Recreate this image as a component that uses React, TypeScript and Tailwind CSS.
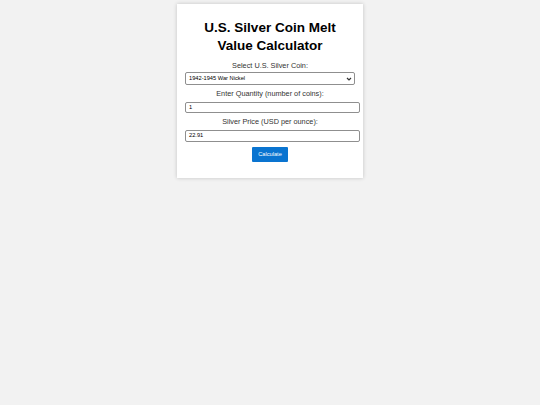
export default function App() {
  return (
    <div
      className="min-h-[405px] bg-[#f2f2f2] pt-[4px]"
      style={{ fontFamily: '"Liberation Sans", Arial, sans-serif' }}
    >
      <div className="mx-auto w-[186px] bg-white px-[8px] pt-[14.5px] pb-[16px] shadow-[0_0_4px_rgba(0,0,0,0.2)]">
        <h1 className="text-center text-[13.5px] font-bold leading-[18px] text-black">
          U.S. Silver Coin Melt Value Calculator
        </h1>
        <div className="mt-[6.5px] flex flex-col">
          <label className="block text-center text-[7.3px] leading-[9px] text-[#333]">
            Select U.S. Silver Coin:
          </label>
          <div className="mt-[2px] flex h-[13px] w-[170px] items-center justify-between rounded-[2px] border border-[#8f8f8f] bg-white pl-[3px] pr-[2px]">
            <span className="text-[5.7px] text-black">1942-1945 War Nickel</span>
            <svg width="6" height="4" viewBox="0 0 6 4">
              <path d="M1 1 L3 3 L5 1" fill="none" stroke="#333" strokeWidth="1.2" />
            </svg>
          </div>
          <label className="mt-[3.5px] block text-center text-[7.3px] leading-[9px] text-[#333]">
            Enter Quantity (number of coins):
          </label>
          <div className="mt-[4px] flex h-[11.5px] w-[175px] items-center rounded-[2px] border border-[#8f8f8f] bg-white px-[3px]">
            <span className="text-[5.7px] text-black">1</span>
          </div>
          <label className="mt-[4px] block text-center text-[7.3px] leading-[9px] text-[#333]">
            Silver Price (USD per ounce):
          </label>
          <div className="mt-[4px] flex h-[11.5px] w-[175px] items-center rounded-[2px] border border-[#8f8f8f] bg-white px-[3px]">
            <span className="text-[5.7px] text-black">22.91</span>
          </div>
          <div className="mt-[5.5px] flex justify-center">
            <button className="h-[14.5px] w-[36.5px] rounded-[1px] bg-[#0a74d0] text-[5.7px] text-white">
              Calculate
            </button>
          </div>
        </div>
      </div>
    </div>
  );
}
